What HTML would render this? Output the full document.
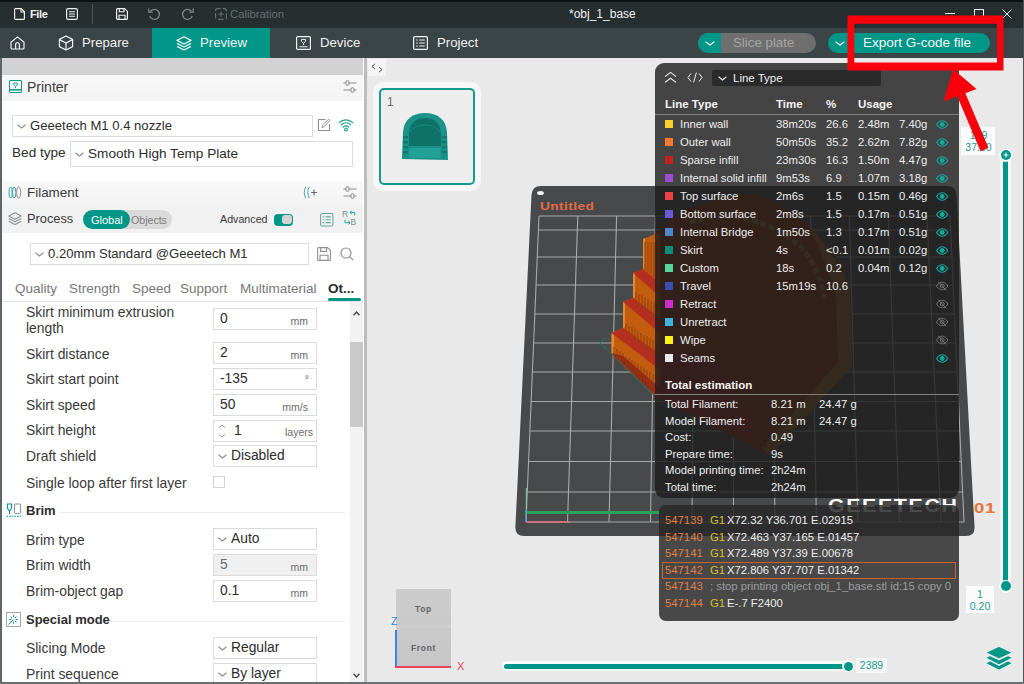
<!DOCTYPE html>
<html lang="en">
<head>
<meta charset="utf-8">
<title>*obj_1_base</title>
<style>
*{box-sizing:border-box;margin:0;padding:0}
html,body{width:1024px;height:684px;overflow:hidden;background:#e9e9e9}
body{font-family:"Liberation Sans",sans-serif;font-size:13px;color:#363636;position:relative}
.a{position:absolute}
.t{position:absolute;white-space:nowrap;line-height:16px}
svg{position:absolute;overflow:visible}
/* ---- chrome ---- */
#titlebar{left:0;top:0;width:1024px;height:28px;background:#262e30}
#tabbar{left:0;top:28px;width:1024px;height:30px;background:#3b4446}
#tabbar .tab{position:absolute;top:0;height:30px;color:#f2f2f2;font-size:13.2px;line-height:30px}
#acttab{left:152px;top:0;width:118px;height:30px;background:#009688}
/* ---- left panel ---- */
#panel{left:2px;top:58px;width:362px;height:626px;background:#fff}
.hdr{position:absolute;left:0;width:361px;background:linear-gradient(#f8f8f8,#f3f3f3)}
.box{position:absolute;border:1px solid #dbdbdb;background:#fff}
.lbl{position:absolute;white-space:nowrap;font-size:13.9px;color:#3a3a3a;line-height:16px}
.unit{position:absolute;white-space:nowrap;font-size:10.5px;color:#6b6b6b;line-height:12px;text-align:right}
.val{position:absolute;white-space:nowrap;font-size:13.8px;color:#2d2d2d;line-height:16px}
/* ---- legend ---- */
#legend{left:654.5px;top:62.5px;width:304.3px;height:435.5px;background:rgba(30,30,30,.81);border-radius:9px}
.lt{position:absolute;white-space:nowrap;color:#eeeeee;font-size:11.3px;line-height:14px}
#gcode{left:659px;top:505px;width:300px;height:116px;background:rgba(40,40,40,.84);border-radius:7px}
.sw{position:absolute;width:8px;height:8px}
</style>
</head>
<body>
<!-- ======= TITLE BAR ======= -->
<div id="titlebar" class="a">
  <div class="a" style="left:0;top:0;width:1024px;height:2px;background:#0d1112"></div>
  <div class="t" style="left:30px;top:6px;color:#f4f4f4;font-size:11px;font-weight:bold;letter-spacing:-0.4px">File</div>
  <div class="a" style="left:92px;top:4px;width:1px;height:20px;background:#4a5355"></div>
  <div class="t" style="left:230px;top:6px;color:#66706f;font-size:11.3px">Calibration</div>
  <div class="t" style="left:569px;top:6px;color:#f1f1f1;font-size:12px">*obj_1_base</div>
</div>
<!-- ======= TAB BAR ======= -->
<div id="tabbar" class="a">
  <div id="acttab" class="a"></div>
  <div class="tab" style="left:82px">Prepare</div>
  <div class="tab" style="left:200px">Preview</div>
  <div class="tab" style="left:320px">Device</div>
  <div class="tab" style="left:437px">Project</div>
</div>
<svg style="left:14px;top:8px" width="11" height="12" viewBox="0 0 11 12"><path d="M1.6 0.6H7.2L10.4 3.8V10.4a1 1 0 0 1-1 1H1.6a1 1 0 0 1-1-1V1.6a1 1 0 0 1 1-1z" fill="none" stroke="#f2f2f2" stroke-width="1.2"/><path d="M7 0.8V4H10.2" fill="none" stroke="#f2f2f2" stroke-width="1.1"/></svg>
<svg style="left:66px;top:8px" width="12" height="12" viewBox="0 0 12 12"><rect x="0.6" y="0.6" width="10.8" height="10.8" rx="1.6" fill="none" stroke="#f2f2f2" stroke-width="1.2"/><path d="M3 3.8H9M3 6H9M3 8.2H9" stroke="#f2f2f2" stroke-width="1.1"/></svg>
<svg style="left:116px;top:8px" width="12" height="12" viewBox="0 0 12 12"><path d="M1.6 0.6H8.6L11.4 3.4V10.4a1 1 0 0 1-1 1H1.6a1 1 0 0 1-1-1V1.6a1 1 0 0 1 1-1z" fill="none" stroke="#f2f2f2" stroke-width="1.2"/><path d="M3.4 0.8V3.8H8V0.8M3 11.2V7.2H9V11.2" fill="none" stroke="#f2f2f2" stroke-width="1.1"/></svg>
<svg style="left:147.5px;top:8px" width="13" height="12" viewBox="0 0 13 12"><path d="M2.4 3.4A5 5 0 1 1 1.7 8" fill="none" stroke="#828b89" stroke-width="1.2"/><path d="M0.8 0.6V4.2H4.6" fill="none" stroke="#828b89" stroke-width="1.2"/></svg>
<svg style="left:181px;top:8px" width="13" height="12" viewBox="0 0 13 12"><path d="M10.6 3.4A5 5 0 1 0 11.3 8" fill="none" stroke="#828b89" stroke-width="1.2"/><path d="M12.2 0.6V4.2H8.4" fill="none" stroke="#828b89" stroke-width="1.2"/></svg>
<svg style="left:215px;top:8px" width="12" height="12" viewBox="0 0 12 12"><rect x="0.6" y="0.6" width="10.8" height="10.8" rx="2" fill="none" stroke="#69726f" stroke-width="1.1" stroke-dasharray="5.4 2.2" stroke-dashoffset="2.6"/><path d="M6 3.4V8.6M3.4 6H8.6" stroke="#69726f" stroke-width="1.1"/></svg>
<div class="a" style="left:945px;top:13px;width:10px;height:1px;background:#f2f2f2"></div>
<div class="a" style="left:974px;top:9px;width:10px;height:10px;border:1px solid #f2f2f2"></div>
<svg style="left:1002px;top:9px" width="10" height="10" viewBox="0 0 10 10"><path d="M0.5 0.5L9.5 9.5M9.5 0.5L0.5 9.5" stroke="#f2f2f2" stroke-width="1"/></svg>
<svg style="left:10px;top:36px" width="15" height="14" viewBox="0 0 15 14"><path d="M1 6.2L7.5 0.9 14 6.2V12a1 1 0 0 1-1 1H2a1 1 0 0 1-1-1z" fill="none" stroke="#f2f2f2" stroke-width="1.2" stroke-linejoin="round"/><path d="M5.6 13V8.6a1.9 1.9 0 0 1 3.8 0V13" fill="none" stroke="#f2f2f2" stroke-width="1.2"/></svg>
<svg style="left:58px;top:35px" width="16" height="16" viewBox="0 0 16 16"><path d="M8 1L14.6 4.4V11.6L8 15 1.4 11.6V4.4z" fill="none" stroke="#f2f2f2" stroke-width="1.2" stroke-linejoin="round"/><path d="M1.6 4.6L8 8 14.4 4.6M8 8V14.6" fill="none" stroke="#f2f2f2" stroke-width="1.2"/></svg>
<svg style="left:175.7px;top:36px" width="16" height="15" viewBox="0 0 16 15"><g fill="none" stroke="#f2f2f2" stroke-width="1.2" stroke-linejoin="round"><path d="M8 0.8L15 4.4 8 8 1 4.4z"/><path d="M1 7.4L8 11 15 7.4"/><path d="M1 10.4L8 14 15 10.4"/></g></svg>
<svg style="left:296px;top:36px" width="15" height="14" viewBox="0 0 15 14"><rect x="0.6" y="0.6" width="13.8" height="12.8" rx="1" fill="none" stroke="#f2f2f2" stroke-width="1.2"/><path d="M5.4 3.4h4.2v1.8L7.5 7.4 5.4 5.2z" fill="none" stroke="#f2f2f2" stroke-width="1"/><path d="M7.5 7.4v1.6M3.4 10.8H11.6" stroke="#f2f2f2" stroke-width="1.1"/></svg>
<svg style="left:413px;top:36px" width="15" height="14" viewBox="0 0 15 14"><rect x="0.6" y="0.6" width="13.8" height="12.8" rx="1" fill="none" stroke="#f2f2f2" stroke-width="1.2"/><path d="M3.2 4h1.6M6.2 4h5.6M3.2 7h1.6M6.2 7h5.6M3.2 10h1.6M6.2 10h5.6" stroke="#f2f2f2" stroke-width="1.2"/></svg>
<div class="a" style="left:698px;top:33.2px;width:117.5px;height:20.3px;border-radius:10px;background:#6f6f6f;overflow:hidden"><div class="a" style="left:0;top:0;width:23px;height:21px;background:#009688"></div></div>
<svg style="left:705px;top:41px" width="10" height="5" viewBox="0 0 10 5"><path d="M0.6 0.8L5 4 9.4 0.8" fill="none" stroke="#f2f2f2" stroke-width="1.2"/></svg>
<div class="t" style="left:733px;top:35px;font-size:13.3px;color:#a4a4a4">Slice plate</div>
<div class="a" style="left:827.5px;top:33.2px;width:162.5px;height:20.3px;border-radius:10px;background:#009688"></div>
<div class="a" style="left:851px;top:33px;width:1px;height:20px;background:#3b4446"></div>
<svg style="left:835px;top:41px" width="10" height="5" viewBox="0 0 10 5"><path d="M0.6 0.8L5 4 9.4 0.8" fill="none" stroke="#f2f2f2" stroke-width="1.2"/></svg>
<div class="t" style="left:863px;top:35px;font-size:13.5px;color:#f6f6f6">Export G-code file</div>
<!-- ======= LEFT PANEL ======= -->
<div class="a" style="left:0;top:58px;width:2px;height:626px;background:#5f6566"></div>
<div id="panel" class="a">
  <div class="a" style="left:0;top:0;width:361px;height:17px;background:#d2d2d2"></div>
</div>
<div class="hdr" style="left:2px;top:75px;height:26px"></div>
<svg style="left:8.5px;top:80.3px" width="13" height="13" viewBox="0 0 14 14"><rect x="0.6" y="0.6" width="12.8" height="12.8" rx="1" fill="#fff" stroke="#009688" stroke-width="1.1"/><path d="M1 10.6H13" stroke="#009688" stroke-width="1.6"/><path d="M5.2 3.2h3.6v2.2L7 7.2 5.2 5.4z" fill="none" stroke="#009688" stroke-width="1"/><path d="M7 7.2v1.6" stroke="#009688" stroke-width="1"/></svg>
<div class="t" style="left:27px;top:79px;font-size:14px;color:#3a3a3a">Printer</div>
<svg style="left:343px;top:80px" width="14" height="13" viewBox="0 0 14 13"><g fill="none" stroke="#8a8a8a" stroke-width="1"><path d="M0.5 3H3M6 3H13.5M0.5 10H8M11 10H13.5"/><rect x="3" y="0.8" width="3" height="4.4" rx="1"/><rect x="8" y="7.8" width="3" height="4.4" rx="1"/></g></svg>
<div class="box" style="left:12px;top:114.6px;width:301px;height:22px"></div>
<svg style="left:17px;top:124px" width="9" height="5" viewBox="0 0 9 5"><path d="M0.5 0.8 L4.5 4 L8.5 0.8" fill="none" stroke="#8a8a8a" stroke-width="1.1"/></svg>
<div class="val" style="left:30px;top:118px;font-size:13.1px">Geeetech M1 0.4 nozzle</div>
<svg style="left:317px;top:118px" width="14" height="14" viewBox="0 0 14 14"><path d="M8.5 1.5H1.5V12.5H12.5V6" fill="none" stroke="#8e8e8e" stroke-width="1.1"/><path d="M5 9.5L5.5 7.2 11.6 1.1 13 2.5 6.9 8.8z" fill="#fff" stroke="#8e8e8e" stroke-width="1"/></svg>
<svg style="left:338px;top:118px" width="16" height="14" viewBox="0 0 16 14"><g fill="none" stroke="#1aa599" stroke-width="1.2" stroke-linecap="round"><path d="M1.2 4.6C5 0.9 11 0.9 14.8 4.6"/><path d="M3.2 6.9C6 4.3 10 4.3 12.8 6.9"/><path d="M5.2 9.1C6.9 7.6 9.1 7.6 10.8 9.1"/><circle cx="8" cy="11.4" r="1.4"/></g></svg>
<div class="lbl" style="left:12px;top:145px;font-size:13.6px;color:#2d2d2d">Bed type</div>
<div class="box" style="left:70px;top:141px;width:283px;height:26px"></div>
<svg style="left:75px;top:152px" width="9" height="5" viewBox="0 0 9 5"><path d="M0.5 0.8 L4.5 4 L8.5 0.8" fill="none" stroke="#8a8a8a" stroke-width="1.1"/></svg>
<div class="val" style="left:88px;top:146px;font-size:13.6px">Smooth High Temp Plate</div>
<div class="hdr" style="left:2px;top:181px;height:25px"></div>
<svg style="left:8px;top:186px" width="14" height="13" viewBox="0 0 14 13"><g fill="none" stroke="#3aa79d" stroke-width="1"><ellipse cx="2.6" cy="6.5" rx="1.6" ry="5.6"/><ellipse cx="6.2" cy="6.5" rx="1.6" ry="5.6"/><ellipse cx="10.6" cy="6.5" rx="2" ry="5.6" stroke="#8a8a8a"/></g></svg>
<div class="t" style="left:27px;top:185px;font-size:13.4px;color:#3a3a3a">Filament</div>
<svg style="left:303px;top:186px" width="15" height="13" viewBox="0 0 15 13"><g fill="none" stroke="#4aa79f" stroke-width="1"><path d="M3 0.8C0.8 3.5 0.8 9.5 3 12.2"/><path d="M6.5 0.8C4.3 3.5 4.3 9.5 6.5 12.2"/></g><path d="M8 6.5H14M11 3.5V9.5" stroke="#6b6b6b" stroke-width="1.1" fill="none"/></svg>
<svg style="left:343px;top:186px" width="14" height="13" viewBox="0 0 14 13"><g fill="none" stroke="#8a8a8a" stroke-width="1"><path d="M0.5 3H3M6 3H13.5M0.5 10H8M11 10H13.5"/><rect x="3" y="0.8" width="3" height="4.4" rx="1"/><rect x="8" y="7.8" width="3" height="4.4" rx="1"/></g></svg>
<div class="hdr" style="left:2px;top:206px;height:27px;background:#f1f1f1"></div>
<svg style="left:8px;top:212px" width="14" height="13" viewBox="0 0 14 13"><g fill="none" stroke="#8a9492" stroke-width="1.1" stroke-linejoin="round"><path d="M7 0.8L13.2 4 7 7.2 0.8 4z"/><path d="M0.8 6.6L7 9.8 13.2 6.6"/><path d="M0.8 9.2L7 12.4 13.2 9.2"/></g></svg>
<div class="t" style="left:27px;top:211px;font-size:12.8px;color:#3a3a3a">Process</div>
<div class="a" style="left:83px;top:210px;width:89px;height:19px;border-radius:10px;background:#dadada"></div>
<div class="a" style="left:83px;top:210px;width:47px;height:19px;border-radius:10px;background:#009688"></div>
<div class="t" style="left:91px;top:212px;font-size:11px;color:#fff">Global</div>
<div class="t" style="left:131px;top:212px;font-size:10.6px;color:#7c7c7c">Objects</div>
<div class="t" style="left:220px;top:211px;font-size:10.7px;color:#3a3a3a">Advanced</div>
<div class="a" style="left:273.7px;top:213.5px;width:19.6px;height:12.8px;border-radius:4px;background:#009688"></div>
<div class="a" style="left:281.5px;top:215.3px;width:10px;height:9.2px;border-radius:3px;background:#d4d4d4"></div>
<svg style="left:320px;top:213px" width="13.5" height="13.5" viewBox="0 0 14 14"><rect x="0.6" y="0.6" width="12.8" height="12.8" rx="1.5" fill="none" stroke="#6ea39d" stroke-width="1.1"/><g stroke="#6ea39d" stroke-width="1.1"><path d="M2.8 4h1.6M5.8 4h5.4M2.8 7h1.6M5.8 7h5.4M2.8 10h1.6M5.8 10h5.4"/></g></svg>
<div class="t" style="left:342px;top:209.5px;font-size:8.5px;line-height:9px;color:#8a8a8a">R</div>
<div class="t" style="left:350.5px;top:217.5px;font-size:8.5px;line-height:9px;color:#8a8a8a">B</div>
<svg style="left:349px;top:210px" width="7" height="6.5" viewBox="0 0 8 7"><path d="M1 2.6H6.5V6M1 2.6L3.2 0.6M1 2.6L3.2 4.6" fill="none" stroke="#1aa599" stroke-width="1.1"/></svg>
<svg style="left:343.5px;top:219px" width="7" height="6.5" viewBox="0 0 8 7"><path d="M1.2 0.5V4H7M7 4L4.8 2M7 4L4.8 6" fill="none" stroke="#1aa599" stroke-width="1.1"/></svg>
<div class="box" style="left:30px;top:243px;width:279px;height:22px"></div>
<svg style="left:35px;top:252px" width="9" height="5" viewBox="0 0 9 5"><path d="M0.5 0.8 L4.5 4 L8.5 0.8" fill="none" stroke="#8a8a8a" stroke-width="1.1"/></svg>
<div class="val" style="left:48px;top:246px;font-size:13.1px">0.20mm Standard @Geeetech M1</div>
<svg style="left:317px;top:247px" width="14" height="14" viewBox="0 0 14 14"><path d="M1.6 0.6H10.4L13.4 3.6V12.4a1 1 0 0 1-1 1H1.6a1 1 0 0 1-1-1V1.6a1 1 0 0 1 1-1z" fill="none" stroke="#909090" stroke-width="1.1"/><path d="M3.6 0.8V4.4H9.6V0.8M3 13.2V8.2H11V13.2" fill="none" stroke="#909090" stroke-width="1.1"/></svg>
<svg style="left:340px;top:247px" width="14" height="14" viewBox="0 0 14 14"><circle cx="6" cy="6" r="5" fill="none" stroke="#909090" stroke-width="1.1"/><path d="M9.6 9.6L13.2 13.2" stroke="#909090" stroke-width="1.2"/></svg>
<div class="t" style="left:15px;top:280.6px;font-size:13.5px;color:#787878">Quality</div>
<div class="t" style="left:69px;top:280.6px;font-size:13.5px;color:#787878">Strength</div>
<div class="t" style="left:132px;top:280.6px;font-size:13.5px;color:#787878">Speed</div>
<div class="t" style="left:180px;top:280.6px;font-size:13.5px;color:#787878">Support</div>
<div class="t" style="left:240px;top:280.6px;font-size:13.5px;color:#787878">Multimaterial</div>
<div class="t" style="left:328px;top:280.6px;font-size:13.5px;color:#2d2d2d;font-weight:bold">Ot...</div>
<div class="a" style="left:2px;top:301px;width:361px;height:1px;background:#e3e3e3"></div>
<div class="a" style="left:328px;top:298px;width:33px;height:3px;border-radius:1.5px;background:#009688"></div>
<div class="a" style="left:350px;top:302px;width:13px;height:382px;background:#f2f2f2"></div>
<div class="a" style="left:350px;top:342px;width:13px;height:85px;background:#c9c9c9"></div>
<svg style="left:353px;top:311px" width="7" height="5" viewBox="0 0 7 5"><path d="M0.6 4.2L3.5 1 6.4 4.2" fill="none" stroke="#4a4a4a" stroke-width="1.4"/></svg>
<svg style="left:353px;top:673px" width="7" height="5" viewBox="0 0 7 5"><path d="M0.6 0.8L3.5 4 6.4 0.8" fill="none" stroke="#4a4a4a" stroke-width="1.4"/></svg>
<div class="lbl" style="left:26px;top:304px">Skirt minimum extrusion</div>
<div class="lbl" style="left:26px;top:320px">length</div>
<div class="box" style="left:213px;top:308px;width:103.5px;height:22px;background:#fff"></div><div class="val" style="left:220px;top:311px;color:#2d2d2d">0</div><div class="unit" style="left:259px;width:49px;top:315px">mm</div>
<div class="lbl" style="left:26px;top:345.5px">Skirt distance</div>
<div class="box" style="left:213px;top:342px;width:103.5px;height:22px;background:#fff"></div><div class="val" style="left:220px;top:345px;color:#2d2d2d">2</div><div class="unit" style="left:259px;width:49px;top:349px">mm</div>
<div class="lbl" style="left:26px;top:371px">Skirt start point</div>
<div class="box" style="left:213px;top:368px;width:103.5px;height:22px;background:#fff"></div><div class="val" style="left:220px;top:371px;color:#2d2d2d">-135</div>
<div class="unit" style="left:260px;width:49px;top:373px">°</div>
<div class="lbl" style="left:26px;top:397px">Skirt speed</div>
<div class="box" style="left:213px;top:394px;width:103.5px;height:22px;background:#fff"></div><div class="val" style="left:220px;top:397px;color:#2d2d2d">50</div><div class="unit" style="left:259px;width:49px;top:401px">mm/s</div>
<div class="lbl" style="left:26px;top:422px">Skirt height</div>
<div class="box" style="left:213px;top:420px;width:103.5px;height:22px"></div>
<svg style="left:218px;top:424px" width="8" height="14" viewBox="0 0 8 14"><path d="M0.8 3.8L4 1 7.2 3.8M0.8 10.2L4 13 7.2 10.2" fill="none" stroke="#9a9a9a" stroke-width="1"/></svg>
<div class="val" style="left:234px;top:423px">1</div>
<div class="unit" style="left:260px;width:53px;top:426px">layers</div>
<div class="lbl" style="left:26px;top:448px">Draft shield</div>
<div class="box" style="left:213px;top:445px;width:103.5px;height:22px"></div><svg style="left:218px;top:454px" width="9" height="5" viewBox="0 0 9 5"><path d="M0.5 0.8 L4.5 4 L8.5 0.8" fill="none" stroke="#8a8a8a" stroke-width="1.1"/></svg><div class="val" style="left:231px;top:448px">Disabled</div>
<div class="lbl" style="left:26px;top:474.5px">Single loop after first layer</div>
<div class="box" style="left:213px;top:476px;width:12px;height:12px;border-color:#d4d4d4"></div>
<svg style="left:6px;top:503px" width="16" height="15" viewBox="0 0 16 15"><path d="M1.4 1h4.2v4.2L3.5 8.2 1.4 5.2z" fill="none" stroke="#009688" stroke-width="1.1"/><path d="M3.5 8.2v3" stroke="#009688" stroke-width="1.1"/><rect x="8.6" y="1" width="6" height="9.4" rx="0.8" fill="none" stroke="#8a8a8a" stroke-width="1"/><path d="M0.5 13.2H15.5" stroke="#009688" stroke-width="1.1" stroke-dasharray="1.6 1"/></svg>
<div class="lbl" style="left:26px;top:503px;font-weight:bold;font-size:13px;color:#2d2d2d">Brim</div>
<div class="a" style="left:60px;top:512px;width:285px;height:1px;background:#ebebeb"></div>
<div class="lbl" style="left:26px;top:531.5px">Brim type</div>
<div class="box" style="left:213px;top:528px;width:103.5px;height:22px"></div><svg style="left:218px;top:537px" width="9" height="5" viewBox="0 0 9 5"><path d="M0.5 0.8 L4.5 4 L8.5 0.8" fill="none" stroke="#8a8a8a" stroke-width="1.1"/></svg><div class="val" style="left:231px;top:531px">Auto</div>
<div class="lbl" style="left:26px;top:557px">Brim width</div>
<div class="box" style="left:213px;top:554px;width:103.5px;height:22px;background:#f0f0f0"></div><div class="val" style="left:220px;top:557px;color:#6b6b6b">5</div><div class="unit" style="left:259px;width:49px;top:561px">mm</div>
<div class="lbl" style="left:26px;top:582.5px">Brim-object gap</div>
<div class="box" style="left:213px;top:580px;width:103.5px;height:22px;background:#fff"></div><div class="val" style="left:220px;top:583px;color:#2d2d2d">0.1</div><div class="unit" style="left:259px;width:49px;top:587px">mm</div>
<svg style="left:6px;top:612px" width="15" height="15" viewBox="0 0 15 15"><rect x="0.6" y="0.6" width="13.8" height="13.8" fill="none" stroke="#9a9a9a" stroke-width="0.9"/><g stroke="#009688" stroke-width="1" fill="none"><path d="M2.5 12.5L7.5 7.5"/><path d="M7.5 3.2v2M7.5 9.6v2M3.4 7.5h2M9.6 7.5h2M4.6 4.6l1.4 1.4M10.4 4.6L9 6M10.4 10.4L9 9"/></g></svg>
<div class="lbl" style="left:26px;top:612px;font-weight:bold;font-size:13px;color:#2d2d2d">Special mode</div>
<div class="a" style="left:111px;top:621px;width:234px;height:1px;background:#ebebeb"></div>
<div class="lbl" style="left:26px;top:640px">Slicing Mode</div>
<div class="box" style="left:213px;top:637px;width:103.5px;height:22px"></div><svg style="left:218px;top:646px" width="9" height="5" viewBox="0 0 9 5"><path d="M0.5 0.8 L4.5 4 L8.5 0.8" fill="none" stroke="#8a8a8a" stroke-width="1.1"/></svg><div class="val" style="left:231px;top:640px">Regular</div>
<div class="lbl" style="left:26px;top:666px">Print sequence</div>
<div class="box" style="left:213px;top:663px;width:103.5px;height:22px"></div><svg style="left:218px;top:672px" width="9" height="5" viewBox="0 0 9 5"><path d="M0.5 0.8 L4.5 4 L8.5 0.8" fill="none" stroke="#8a8a8a" stroke-width="1.1"/></svg><div class="val" style="left:231px;top:666px">By layer</div>
<div class="a" style="left:363.7px;top:58px;width:3.8px;height:626px;background:#bdbdbd"></div>
<!-- ======= VIEWPORT ======= -->
<div id="view" class="a" style="left:367px;top:58px;width:657px;height:626px;background:#e9e9e9;overflow:hidden">
</div>
<div class="a" style="left:368px;top:59px;width:18px;height:17px;background:#f4f4f4"></div>
<svg style="left:371px;top:63px" width="12" height="10" viewBox="0 0 12 10"><path d="M4 0.8L1 3.4 4 6M8 4L11 6.6 8 9.2" fill="none" stroke="#4a4a4a" stroke-width="1"/></svg>
<div class="a" style="left:373px;top:82px;width:107.5px;height:108.5px;border-radius:10px;background:#f7f7f7"></div>
<div class="a" style="left:379px;top:88px;width:96px;height:97px;border-radius:5px;border:2px solid #169a8d;background:#ededed"></div>
<div class="t" style="left:387px;top:94px;font-size:12px;color:#6a6a6a">1</div>
<svg style="left:398px;top:110px" width="54" height="52" viewBox="0 0 54 52"><path d="M4 49L5 22C6 9 15 3 27 3S48 9 49 22L50 50z" fill="#19938a"/><path d="M11 36V23C12 12 19 8 27 8S42 12 43 23V36z" fill="#0f7269"/><path d="M12 38H42L43 48 11 47.5z" fill="#22a195"/><path d="M12 22C15 17 21 15 27 15S39 17 42 22" fill="none" stroke="#1b8c81" stroke-width="1"/><g fill="#117a70"><rect x="5" y="26" width="5" height="2.4"/><rect x="5" y="31" width="5" height="2.4"/><rect x="5" y="36" width="5" height="2.4"/><rect x="5" y="41" width="5" height="2.4"/><rect x="44" y="26" width="5" height="2.4"/><rect x="44" y="31" width="5" height="2.4"/><rect x="44" y="36" width="5" height="2.4"/><rect x="44" y="41" width="5" height="2.4"/></g></svg>
<svg style="left:0;top:0" width="1024" height="684" viewBox="0 0 1024 684"><path d="M541 186H947Q956 186 956.5 195L974.5 527Q975 536 966 536H524Q515 536 515.4 527L531.5 195Q532 186 541 186z" fill="#47494a"/><path d="M539.0 216H950.0 M538.4 230H950.6 M537.3 257H951.9 M536.1 285H953.2 M534.8 314H954.5 M533.6 343H955.8 M532.4 372H957.1 M531.1 401.5H958.5 M529.9 431H959.8 M528.6 461.5H961.2 M527.3 492H962.6 M526.0 522H964.0 M539.0 216L526.0 522 M577.8 216L567.5 522 M616.6 216L609.0 522 M655.4 216L650.5 522 M694.2 216L692.0 522 M733.0 216L733.5 522 M771.8 216L775.0 522 M810.6 216L816.5 522 M849.4 216L858.0 522 M888.2 216L899.5 522 M927.0 216L941.0 522 M950 216L964 522" fill="none" stroke="#a9aaaa" stroke-width="1.1"/><ellipse cx="540.5" cy="193" rx="3.4" ry="2" fill="#f4f4f4"/><path d="M650 240L675 215Q712 197 756 194Q802 212 835 255Q848 275 850 292L852 366 770 456 653 396z" fill="#8a2c0c"/><path d="M806 222Q846 268 850 292L852 366 770 456 762 448 838 362 836 298Q826 258 806 222z" fill="#9a6228"/><path d="M653 330L720 365 768 448 653 396z" fill="#9a2420"/><path d="M690 222Q750 204 800 246Q822 272 824 300" fill="none" stroke="#9a6a3a" stroke-width="5" stroke-dasharray="6 3"/><path d="M607 337L600 343 700 440" fill="none" stroke="#14806f" stroke-width="1"/><path d="M660 232L643 239V269L633 273V298L623 302V328L611.5 333V353L660 400z" fill="#c25d10"/><path d="M643 239V269L645 268V238z M633 273V298L635 297V272z M623 302V328L625 327V301z M611.5 333V353L614 355V332z" fill="#e08a35"/><path d="M633 273L643 269 660 283V297z M623 302L633 298 660 318V333z M611.5 333L623 328 660 354V370z" fill="#b52f20"/><path d="M611.5 353L660 400V388L623 356z" fill="#96261a"/><path d="M645 242V270 M648 242V272 M651 242V274 M654 242V277 M657 242V279 M636 292V302 M639 294V305 M642 295V307 M645 297V310 M648 299V312 M651 301V314 M654 303V317 M657 304V319 M626 324V333 M629 326V336 M632 327V338 M635 329V341 M638 331V343 M641 333V345 M644 335V348 M647 336V350 M650 338V353 M653 340V355 M656 342V357 M659 344V360 M614 347V359 M617 349V361 M620 351V364 M623 353V366 M626 356V369 M629 358V371 M632 360V374 M635 362V376 M638 364V379 M641 366V382 M644 368V384 M647 370V387 M650 372V389 M653 374V392 M656 376V394 M659 379V397" stroke="#8f3f0c" stroke-width="1" fill="none"/><path d="M526 512.5H660" stroke="#2f9e5c" stroke-width="3"/><path d="M526.3 488V522" stroke="#7fd19a" stroke-width="1"/><path d="M526 522H570" stroke="#e4707c" stroke-width="1.4"/><path d="M526 510V522" stroke="#4f8fe0" stroke-width="1"/></svg>
<div class="t" style="left:540px;top:198px;font-size:11.5px;font-weight:bold;color:#e66a48;letter-spacing:0.3px;transform:scaleX(1.2);transform-origin:0 0">Untitled</div>
<div class="t" style="left:828px;top:496px;font-size:19px;line-height:20px;font-weight:bold;color:#fff;letter-spacing:1.5px;transform:scaleX(1.12);transform-origin:0 0">GEEETECH</div>
<div class="t" style="left:973.5px;top:499.5px;font-size:14.5px;font-weight:bold;color:#e8733a;letter-spacing:0.5px;transform:scaleX(1.28);transform-origin:0 0">01</div>
<div class="a" style="left:396px;top:589px;width:55px;height:78px;background:linear-gradient(#cdcdcd,#c6c6c6)"></div>
<div class="a" style="left:396px;top:626px;width:55px;height:1px;background:#d2d2d2"></div>
<div class="t" style="left:396px;width:55px;text-align:center;top:603px;font-size:8.5px;line-height:12px;font-weight:bold;color:#636363;letter-spacing:0.7px">Top</div>
<div class="t" style="left:396px;width:55px;text-align:center;top:642px;font-size:8.5px;line-height:12px;font-weight:bold;color:#636363;letter-spacing:0.7px">Front</div>
<div class="a" style="left:395px;top:630px;width:2px;height:38px;background:#3d86e0"></div>
<div class="a" style="left:395px;top:666px;width:56px;height:2px;background:#f0415a"></div>
<div class="t" style="left:391px;top:614.5px;font-size:10.5px;line-height:12px;color:#3d86e0">Z</div>
<div class="t" style="left:457px;top:659px;font-size:11px;line-height:14px;color:#f0415a">X</div>
<div class="a" style="left:502px;top:661px;width:350px;height:10px;border-radius:5px;background:#fbfbfb"></div>
<div class="a" style="left:504px;top:663.5px;width:344px;height:5px;border-radius:2.5px;background:#009688"></div>
<div class="a" style="left:842px;top:660px;width:12px;height:12px;border-radius:6px;background:#fff"></div>
<div class="a" style="left:843.5px;top:661.5px;width:9px;height:9px;border-radius:5px;background:#009688"></div>
<div class="a" style="left:856px;top:658px;width:31px;height:15px;background:#f7f7f7"></div>
<div class="t" style="left:856px;width:31px;text-align:center;top:658px;font-size:10.5px;line-height:15px;color:#1b9a8e">2389</div>
<div class="a" style="left:999.5px;top:150px;width:11.5px;height:440px;border-radius:5px;background:#f6f6f6"></div>
<div class="a" style="left:1002.8px;top:155px;width:5.4px;height:431px;background:#009688"></div>
<div class="a" style="left:999px;top:148.5px;width:13px;height:13px;border-radius:6.5px;background:#fff"></div>
<div class="a" style="left:1000.5px;top:150px;width:10px;height:10px;border-radius:5px;background:#009688"></div>
<svg style="left:1002.5px;top:152px" width="6" height="6" viewBox="0 0 6 6"><path d="M3 0.5V5.5M0.5 3H5.5" stroke="#fff" stroke-width="1"/></svg>
<div class="a" style="left:999px;top:579.5px;width:13px;height:13px;border-radius:6.5px;background:#fff"></div>
<div class="a" style="left:1000.5px;top:581px;width:10px;height:10px;border-radius:5px;background:#009688"></div>
<div class="a" style="left:961px;top:127px;width:34px;height:28px;background:#fbfbfb"></div>
<div class="t" style="left:962px;width:33px;text-align:center;top:129px;font-size:10.5px;line-height:12px;color:#1b9a8e">179</div>
<div class="t" style="left:962px;width:33px;text-align:center;top:141px;font-size:10.5px;line-height:12px;color:#1b9a8e">37.80</div>
<div class="a" style="left:966px;top:586px;width:28px;height:27px;background:#fbfbfb"></div>
<div class="t" style="left:966px;width:28px;text-align:center;top:588px;font-size:10.5px;line-height:12px;color:#1b9a8e">1</div>
<div class="t" style="left:966px;width:28px;text-align:center;top:600px;font-size:10.5px;line-height:12px;color:#1b9a8e">0.20</div>
<svg style="left:984px;top:645px" width="30" height="27" viewBox="0 0 30 27"><g fill="#009688" stroke="#ececec" stroke-width="1.2" stroke-linejoin="round"><path d="M1.2 18.2L6 15.8 15 20.2 24 15.8 28.8 18.2 15 25.4z"/><path d="M1.2 12.8L6 10.4 15 14.8 24 10.4 28.8 12.8 15 20z"/><path d="M15 1.2L28.8 7.6 15 14 1.2 7.6z"/></g></svg>
<div id="legend" class="a"></div>
<svg style="left:664px;top:71px" width="13" height="13" viewBox="0 0 13 13"><path d="M1 5.6L6.5 1.4 12 5.6M1 11.4L6.5 7.2 12 11.4" fill="none" stroke="#ededed" stroke-width="1.1"/></svg>
<svg style="left:687px;top:72px" width="16" height="11" viewBox="0 0 16 11"><path d="M4 1.4L1 5.5 4 9.6M12 1.4L15 5.5 12 9.6M9.4 0.6L6.6 10.4" fill="none" stroke="#ededed" stroke-width="1"/></svg>
<div class="a" style="left:712px;top:70px;width:169px;height:16px;border-radius:2px;background:#2a2a2a"></div>
<svg style="left:718px;top:76px" width="9" height="5" viewBox="0 0 9 5"><path d="M0.6 0.8L4.5 4 8.4 0.8" fill="none" stroke="#ededed" stroke-width="1.1"/></svg>
<div class="lt" style="left:733px;top:71px;font-size:11.5px">Line Type</div>
<div class="lt" style="left:665px;top:97px;font-weight:bold;font-size:11.5px;color:#f4f4f4">Line Type</div>
<div class="lt" style="left:776px;top:97px;font-weight:bold;font-size:11.5px;color:#f4f4f4">Time</div>
<div class="lt" style="left:826px;top:97px;font-weight:bold;font-size:11.5px;color:#f4f4f4">%</div>
<div class="lt" style="left:858px;top:97px;font-weight:bold;font-size:11.5px;color:#f4f4f4">Usage</div>
<div class="a" style="left:654.5px;top:113.5px;width:304.3px;height:1px;background:#808080"></div>
<div class="sw" style="left:665px;top:120.0px;background:#fbd22d"></div>
<div class="lt" style="left:680px;top:117px;">Inner wall</div>
<div class="lt" style="left:776px;top:117px;">38m20s</div>
<div class="lt" style="left:826px;top:117px;">26.6</div>
<div class="lt" style="left:858px;top:117px;">2.48m</div>
<div class="lt" style="left:899px;top:117px;">7.40g</div>
<svg style="left:936px;top:119.5px" width="12.4" height="9" viewBox="0 0 14 10"><path d="M0.7 5C3 1.4 5.2 0.8 7 0.8S11 1.4 13.3 5C11 8.6 8.8 9.2 7 9.2S3 8.6 0.7 5z" fill="none" stroke="#14a89a" stroke-width="1.3"/><circle cx="7" cy="5" r="2.8" fill="#14a89a"/></svg>
<div class="sw" style="left:665px;top:138.0px;background:#fb7a32"></div>
<div class="lt" style="left:680px;top:135px;">Outer wall</div>
<div class="lt" style="left:776px;top:135px;">50m50s</div>
<div class="lt" style="left:826px;top:135px;">35.2</div>
<div class="lt" style="left:858px;top:135px;">2.62m</div>
<div class="lt" style="left:899px;top:135px;">7.82g</div>
<svg style="left:936px;top:137.5px" width="12.4" height="9" viewBox="0 0 14 10"><path d="M0.7 5C3 1.4 5.2 0.8 7 0.8S11 1.4 13.3 5C11 8.6 8.8 9.2 7 9.2S3 8.6 0.7 5z" fill="none" stroke="#14a89a" stroke-width="1.3"/><circle cx="7" cy="5" r="2.8" fill="#14a89a"/></svg>
<div class="sw" style="left:665px;top:156.1px;background:#c4221f"></div>
<div class="lt" style="left:680px;top:153px;">Sparse infill</div>
<div class="lt" style="left:776px;top:153px;">23m30s</div>
<div class="lt" style="left:826px;top:153px;">16.3</div>
<div class="lt" style="left:858px;top:153px;">1.50m</div>
<div class="lt" style="left:899px;top:153px;">4.47g</div>
<svg style="left:936px;top:155.5px" width="12.4" height="9" viewBox="0 0 14 10"><path d="M0.7 5C3 1.4 5.2 0.8 7 0.8S11 1.4 13.3 5C11 8.6 8.8 9.2 7 9.2S3 8.6 0.7 5z" fill="none" stroke="#14a89a" stroke-width="1.3"/><circle cx="7" cy="5" r="2.8" fill="#14a89a"/></svg>
<div class="sw" style="left:665px;top:174.1px;background:#9a4fd0"></div>
<div class="lt" style="left:680px;top:171px;">Internal solid infill</div>
<div class="lt" style="left:776px;top:171px;">9m53s</div>
<div class="lt" style="left:826px;top:171px;">6.9</div>
<div class="lt" style="left:858px;top:171px;">1.07m</div>
<div class="lt" style="left:899px;top:171px;">3.18g</div>
<svg style="left:936px;top:173.5px" width="12.4" height="9" viewBox="0 0 14 10"><path d="M0.7 5C3 1.4 5.2 0.8 7 0.8S11 1.4 13.3 5C11 8.6 8.8 9.2 7 9.2S3 8.6 0.7 5z" fill="none" stroke="#14a89a" stroke-width="1.3"/><circle cx="7" cy="5" r="2.8" fill="#14a89a"/></svg>
<div class="sw" style="left:665px;top:192.1px;background:#f0414a"></div>
<div class="lt" style="left:680px;top:189px;">Top surface</div>
<div class="lt" style="left:776px;top:189px;">2m6s</div>
<div class="lt" style="left:826px;top:189px;">1.5</div>
<div class="lt" style="left:858px;top:189px;">0.15m</div>
<div class="lt" style="left:899px;top:189px;">0.46g</div>
<svg style="left:936px;top:191.5px" width="12.4" height="9" viewBox="0 0 14 10"><path d="M0.7 5C3 1.4 5.2 0.8 7 0.8S11 1.4 13.3 5C11 8.6 8.8 9.2 7 9.2S3 8.6 0.7 5z" fill="none" stroke="#14a89a" stroke-width="1.3"/><circle cx="7" cy="5" r="2.8" fill="#14a89a"/></svg>
<div class="sw" style="left:665px;top:210.2px;background:#6a5ad8"></div>
<div class="lt" style="left:680px;top:207px;">Bottom surface</div>
<div class="lt" style="left:776px;top:207px;">2m8s</div>
<div class="lt" style="left:826px;top:207px;">1.5</div>
<div class="lt" style="left:858px;top:207px;">0.17m</div>
<div class="lt" style="left:899px;top:207px;">0.51g</div>
<svg style="left:936px;top:209.5px" width="12.4" height="9" viewBox="0 0 14 10"><path d="M0.7 5C3 1.4 5.2 0.8 7 0.8S11 1.4 13.3 5C11 8.6 8.8 9.2 7 9.2S3 8.6 0.7 5z" fill="none" stroke="#14a89a" stroke-width="1.3"/><circle cx="7" cy="5" r="2.8" fill="#14a89a"/></svg>
<div class="sw" style="left:665px;top:228.2px;background:#4f86cc"></div>
<div class="lt" style="left:680px;top:225px;">Internal Bridge</div>
<div class="lt" style="left:776px;top:225px;">1m50s</div>
<div class="lt" style="left:826px;top:225px;">1.3</div>
<div class="lt" style="left:858px;top:225px;">0.17m</div>
<div class="lt" style="left:899px;top:225px;">0.51g</div>
<svg style="left:936px;top:227.5px" width="12.4" height="9" viewBox="0 0 14 10"><path d="M0.7 5C3 1.4 5.2 0.8 7 0.8S11 1.4 13.3 5C11 8.6 8.8 9.2 7 9.2S3 8.6 0.7 5z" fill="none" stroke="#14a89a" stroke-width="1.3"/><circle cx="7" cy="5" r="2.8" fill="#14a89a"/></svg>
<div class="sw" style="left:665px;top:246.2px;background:#0c8f76"></div>
<div class="lt" style="left:680px;top:243px;">Skirt</div>
<div class="lt" style="left:776px;top:243px;">4s</div>
<div class="lt" style="left:826px;top:243px;">&lt;0.1</div>
<div class="lt" style="left:858px;top:243px;">0.01m</div>
<div class="lt" style="left:899px;top:243px;">0.02g</div>
<svg style="left:936px;top:245.5px" width="12.4" height="9" viewBox="0 0 14 10"><path d="M0.7 5C3 1.4 5.2 0.8 7 0.8S11 1.4 13.3 5C11 8.6 8.8 9.2 7 9.2S3 8.6 0.7 5z" fill="none" stroke="#14a89a" stroke-width="1.3"/><circle cx="7" cy="5" r="2.8" fill="#14a89a"/></svg>
<div class="sw" style="left:665px;top:264.2px;background:#53d69a"></div>
<div class="lt" style="left:680px;top:261px;">Custom</div>
<div class="lt" style="left:776px;top:261px;">18s</div>
<div class="lt" style="left:826px;top:261px;">0.2</div>
<div class="lt" style="left:858px;top:261px;">0.04m</div>
<div class="lt" style="left:899px;top:261px;">0.12g</div>
<svg style="left:936px;top:263.5px" width="12.4" height="9" viewBox="0 0 14 10"><path d="M0.7 5C3 1.4 5.2 0.8 7 0.8S11 1.4 13.3 5C11 8.6 8.8 9.2 7 9.2S3 8.6 0.7 5z" fill="none" stroke="#14a89a" stroke-width="1.3"/><circle cx="7" cy="5" r="2.8" fill="#14a89a"/></svg>
<div class="sw" style="left:665px;top:282.3px;background:#3a4db0"></div>
<div class="lt" style="left:680px;top:279px;">Travel</div>
<div class="lt" style="left:776px;top:279px;">15m19s</div>
<div class="lt" style="left:826px;top:279px;">10.6</div>
<svg style="left:936px;top:281px" width="12.4" height="10" viewBox="0 0 14 11"><path d="M0.6 5.5C3 1.7 5.2 1.2 7 1.2S11 1.7 13.4 5.5C11 9.3 8.8 9.8 7 9.8S3 9.3 0.6 5.5z" fill="none" stroke="#7b7b7b" stroke-width="1"/><circle cx="7" cy="5.5" r="2.2" fill="none" stroke="#7b7b7b" stroke-width="1"/><path d="M2.5 0.6L11.5 10.4" stroke="#7b7b7b" stroke-width="1.1"/></svg>
<div class="sw" style="left:665px;top:300.3px;background:#cf2bd0"></div>
<div class="lt" style="left:680px;top:297px;">Retract</div>
<svg style="left:936px;top:299px" width="12.4" height="10" viewBox="0 0 14 11"><path d="M0.6 5.5C3 1.7 5.2 1.2 7 1.2S11 1.7 13.4 5.5C11 9.3 8.8 9.8 7 9.8S3 9.3 0.6 5.5z" fill="none" stroke="#7b7b7b" stroke-width="1"/><circle cx="7" cy="5.5" r="2.2" fill="none" stroke="#7b7b7b" stroke-width="1"/><path d="M2.5 0.6L11.5 10.4" stroke="#7b7b7b" stroke-width="1.1"/></svg>
<div class="sw" style="left:665px;top:318.3px;background:#3fb3d9"></div>
<div class="lt" style="left:680px;top:315px;">Unretract</div>
<svg style="left:936px;top:317px" width="12.4" height="10" viewBox="0 0 14 11"><path d="M0.6 5.5C3 1.7 5.2 1.2 7 1.2S11 1.7 13.4 5.5C11 9.3 8.8 9.8 7 9.8S3 9.3 0.6 5.5z" fill="none" stroke="#7b7b7b" stroke-width="1"/><circle cx="7" cy="5.5" r="2.2" fill="none" stroke="#7b7b7b" stroke-width="1"/><path d="M2.5 0.6L11.5 10.4" stroke="#7b7b7b" stroke-width="1.1"/></svg>
<div class="sw" style="left:665px;top:336.4px;background:#f8f516"></div>
<div class="lt" style="left:680px;top:333px;">Wipe</div>
<svg style="left:936px;top:335px" width="12.4" height="10" viewBox="0 0 14 11"><path d="M0.6 5.5C3 1.7 5.2 1.2 7 1.2S11 1.7 13.4 5.5C11 9.3 8.8 9.8 7 9.8S3 9.3 0.6 5.5z" fill="none" stroke="#7b7b7b" stroke-width="1"/><circle cx="7" cy="5.5" r="2.2" fill="none" stroke="#7b7b7b" stroke-width="1"/><path d="M2.5 0.6L11.5 10.4" stroke="#7b7b7b" stroke-width="1.1"/></svg>
<div class="sw" style="left:665px;top:354.4px;background:#e9e9e9"></div>
<div class="lt" style="left:680px;top:351px;">Seams</div>
<svg style="left:936px;top:353.5px" width="12.4" height="9" viewBox="0 0 14 10"><path d="M0.7 5C3 1.4 5.2 0.8 7 0.8S11 1.4 13.3 5C11 8.6 8.8 9.2 7 9.2S3 8.6 0.7 5z" fill="none" stroke="#14a89a" stroke-width="1.3"/><circle cx="7" cy="5" r="2.8" fill="#14a89a"/></svg>
<div class="lt" style="left:665px;top:378px;font-weight:bold;font-size:11.5px;color:#f4f4f4">Total estimation</div>
<div class="a" style="left:654.5px;top:394px;width:304.3px;height:1px;background:#808080"></div>
<div class="lt" style="left:665px;top:397px;">Total Filament:</div>
<div class="lt" style="left:771px;top:397px;">8.21 m</div>
<div class="lt" style="left:819px;top:397px;">24.47 g</div>
<div class="lt" style="left:665px;top:414px;">Model Filament:</div>
<div class="lt" style="left:771px;top:414px;">8.21 m</div>
<div class="lt" style="left:819px;top:414px;">24.47 g</div>
<div class="lt" style="left:665px;top:430px;">Cost:</div>
<div class="lt" style="left:771px;top:430px;">0.49</div>
<div class="lt" style="left:665px;top:447px;">Prepare time:</div>
<div class="lt" style="left:771px;top:447px;">9s</div>
<div class="lt" style="left:665px;top:463px;">Model printing time:</div>
<div class="lt" style="left:771px;top:463px;">2h24m</div>
<div class="lt" style="left:665px;top:480px;">Total time:</div>
<div class="lt" style="left:771px;top:480px;">2h24m</div>
<div id="gcode" class="a"></div>
<div class="a" style="left:662px;top:562px;width:294px;height:17px;border:1px solid #c8622a"></div>
<div class="lt" style="left:665px;top:513px;color:#e27f45">547139</div>
<div class="lt" style="left:710px;top:513px;color:#d3c21f">G1</div>
<div class="lt" style="left:727px;top:513px;">X72.32 Y36.701 E.02915</div>
<div class="lt" style="left:665px;top:530px;color:#e27f45">547140</div>
<div class="lt" style="left:710px;top:530px;color:#d3c21f">G1</div>
<div class="lt" style="left:727px;top:530px;">X72.463 Y37.165 E.01457</div>
<div class="lt" style="left:665px;top:546px;color:#e27f45">547141</div>
<div class="lt" style="left:710px;top:546px;color:#d3c21f">G1</div>
<div class="lt" style="left:727px;top:546px;">X72.489 Y37.39 E.00678</div>
<div class="lt" style="left:665px;top:563px;color:#e27f45">547142</div>
<div class="lt" style="left:710px;top:563px;color:#d3c21f">G1</div>
<div class="lt" style="left:727px;top:563px;">X72.806 Y37.707 E.01342</div>
<div class="lt" style="left:665px;top:579px;color:#e27f45">547143</div>
<div class="lt" style="left:710px;top:579px;color:#9d9d9d">; stop printing object obj_1_base.stl id:15 copy 0</div>
<div class="lt" style="left:665px;top:596px;color:#e27f45">547144</div>
<div class="lt" style="left:710px;top:596px;color:#d3c21f">G1</div>
<div class="lt" style="left:727px;top:596px;">E-.7 F2400</div>
<!--GCODE-->
<svg style="left:0;top:0" width="1024" height="684" viewBox="0 0 1024 684"><path fill-rule="evenodd" d="M847.5 15.5H1003.5V70.5H847.5z M854.3 23.8H997V62.5H854.3z" fill="#fa000c"/><path d="M984.5 149.5L961 94" stroke="#fa000c" stroke-width="8.6" fill="none"/><path d="M953 69L976.5 89 943.5 101.5z" fill="#fa000c"/></svg><div class="a" style="left:1023px;top:0;width:1px;height:684px;background:#4d5354"></div>
<div class="a" style="left:0;top:682px;width:1024px;height:2px;background:#6a6f70"></div>
</body>
</html>
